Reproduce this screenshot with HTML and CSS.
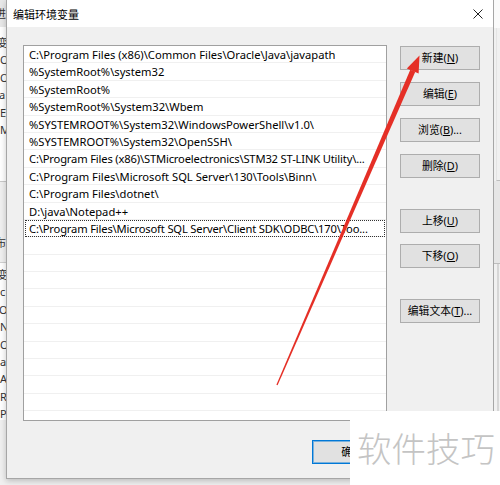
FILE: index.html
```html
<!DOCTYPE html>
<html lang="zh-CN">
<head>
<meta charset="utf-8">
<title>编辑环境变量</title>
<link rel="stylesheet" href="styles.css">
</head>
<body>
<div class="screen">
  <div class="bg-left">
    <div class="bgl-top"><div class="bgl-line cut5">进</div></div>
    <div class="bgl-list first">
      <div class="bgl-line cut3">变</div>
      <div class="bgl-line">Or</div>
      <div class="bgl-line">Or</div>
      <div class="bgl-line cut1">a</div>
      <div class="bgl-line">E</div>
      <div class="bgl-line">M</div>
    </div>
    <div class="bgl-gap"><div class="bgl-line cut5">布</div></div>
    <div class="bgl-list second">
      <div class="bgl-line cut3">变</div>
      <div class="bgl-line">c</div>
      <div class="bgl-line cut1">Or</div>
      <div class="bgl-line">NU</div>
      <div class="bgl-line">OS</div>
      <div class="bgl-line">a</div>
      <div class="bgl-line">A</div>
      <div class="bgl-line">R</div>
      <div class="bgl-line">P</div>
    </div>
  </div>

  <div class="dialog">
    <div class="titlebar">
      <span class="title">编辑环境变量</span>
      <svg class="close" width="10" height="10" viewBox="0 0 10 10"><path d="M0.5 0.5 L9.5 9.5 M9.5 0.5 L0.5 9.5" stroke="#222" stroke-width="1" fill="none"/></svg>
    </div>
    <div class="body">
      <div class="main">
        <div class="listbox">
          <div class="row">C:\Program Files (x86)\Common Files\Oracle\Java\javapath</div>
          <div class="row">%SystemRoot%\system32</div>
          <div class="row">%SystemRoot%</div>
          <div class="row">%SystemRoot%\System32\Wbem</div>
          <div class="row">%SYSTEMROOT%\System32\WindowsPowerShell\v1.0\</div>
          <div class="row">%SYSTEMROOT%\System32\OpenSSH\</div>
          <div class="row trunc">C:\Program Files (x86)\STMicroelectronics\STM32 ST-LINK Utility\...</div>
          <div class="row">C:\Program Files\Microsoft SQL Server\130\Tools\Binn\</div>
          <div class="row">C:\Program Files\dotnet\</div>
          <div class="row">D:\java\Notepad++</div>
          <div class="row focus trunc">C:\Program Files\Microsoft SQL Server\Client SDK\ODBC\170\Too...</div>
          <div class="row"></div>
          <div class="row"></div>
          <div class="row"></div>
          <div class="row"></div>
          <div class="row"></div>
          <div class="row"></div>
          <div class="row"></div>
          <div class="row"></div>
          <div class="row"></div>
          <div class="row"></div>
        </div>
        <div class="buttons">
          <button class="btn">新建(<u>N</u>)</button>
          <button class="btn">编辑(<u>E</u>)</button>
          <button class="btn">浏览(<u>B</u>)...</button>
          <button class="btn">删除(<u>D</u>)</button>
          <button class="btn group-start">上移(<u>U</u>)</button>
          <button class="btn tight">下移(<u>O</u>)</button>
          <button class="btn group-start">编辑文本(<u>T</u>)...</button>
        </div>
      </div>
      <div class="footer">
        <button class="btn default">确定</button>
        <button class="btn">取消</button>
      </div>
    </div>
  </div>

  <div class="bg-right">
    <div class="bgr-top"></div>
    <div class="bgr-a"></div>
    <div class="bgr-b"></div>
    <div class="bgr-c"></div>
  </div>

  <div class="watermark">软件技巧</div>

  <svg class="arrow" width="500" height="485" viewBox="0 0 500 485">
    <polygon points="415.3,71.7 410.3,69.7 276.4,384.8 277.6,385.2" fill="#e52f26"/>
    <polygon points="419.5,55.5 406.8,68.6 418.6,73.4" fill="#e52f26"/>
  </svg>
</div>
</body>
</html>
```

FILE: styles.css
```css
* {
  box-sizing: border-box;
}

html, body {
  margin: 0;
  padding: 0;
  background: #f0f0f0;
}

body {
  font-family: "Noto Sans", "Noto Sans CJK SC", sans-serif;
  font-size: 10.8px;
  color: #000;
}

.screen {
  position: relative;
  width: 500px;
  height: 485px;
  overflow: hidden;
  display: flex;
  align-items: flex-start;
  background: #f0f0f0;
}

/* background window, left sliver */
.bg-left {
  width: 6px;
  height: 485px;
  flex: none;
  overflow: hidden;
  display: flex;
  flex-direction: column;
  background: #f0f0f0;
  color: #333;
  font-size: 11px;
}

.bgl-top {
  height: 27px;
  background: #e8e8e8;
  padding-top: 5px;
}

.bgl-list {
  background: #fff;
}

.bgl-list.first {
  height: 155px;
  padding-top: 7px;
  border-bottom: 1px solid #c9c9c9;
}

.bgl-gap {
  height: 81px;
  padding-top: 52px;
  background: #f0f0f0;
  border-bottom: 1px solid #d0d0d0;
}

.bgl-list.second {
  height: 157px;
  padding-top: 3px;
}

.bgl-line {
  height: 17.4px;
  line-height: 17.4px;
  white-space: nowrap;
}

.cut1 { text-indent: -1px; }
.cut3 { text-indent: -3px; }
.cut5 { text-indent: -5px; }

/* dialog */
.dialog {
  width: 488px;
  flex: none;
  background: #f0f0f0;
  border: 1px solid #a6a6a6;
  border-top: 0;
  box-shadow: 0 2px 6px rgba(0, 0, 0, 0.22);
}

.titlebar {
  height: 27px;
  background: #fff;
  display: flex;
  align-items: center;
  justify-content: space-between;
  padding: 0 10px 0 6px;
}

.title {
  font-size: 11px;
  color: #000;
}

.close {
  display: block;
}

.body {
  padding: 18px 13px 14px 16px;
}

.main {
  display: flex;
  align-items: flex-start;
}

.listbox {
  width: 364px;
  height: 376px;
  flex: none;
  background: #fff;
  border: 1px solid #a0a0a0;
  overflow: hidden;
}

.row {
  height: 17.4px;
  line-height: 16.4px;
  padding-top: 1px;
  padding-left: 5px;
  font-size: 11.2px;
  border-bottom: 1px solid #f0f0f0;
  white-space: nowrap;
  overflow: hidden;
}

.row.trunc {
  letter-spacing: -0.17px;
}

.row.focus {
  outline: 1px dotted #333;
  outline-offset: -1px;
  margin: 0 1px 0 1px;
  padding-left: 4px;
}

.buttons {
  width: 80px;
  margin-left: 13px;
  margin-top: 1px;
  display: flex;
  flex-direction: column;
  gap: 12px;
}

.btn {
  width: 80px;
  height: 24px;
  padding: 0;
  margin: 0;
  background: #e1e1e1;
  border: 1px solid #adadad;
  font-family: "Noto Sans", "Noto Sans CJK SC", sans-serif;
  font-size: 10.8px;
  color: #000;
  line-height: 22px;
  text-align: center;
  white-space: nowrap;
}

.btn u {
  text-underline-offset: 1px;
}

.buttons .group-start {
  margin-top: 19px;
}

.buttons .tight {
  margin-top: -1px;
}

.footer {
  display: flex;
  justify-content: flex-end;
  gap: 8px;
  padding-top: 19px;
}

.btn.default {
  border-color: #0078d7;
  box-shadow: inset 0 0 0 1px rgba(0, 120, 215, 0.45);
}

/* background window, right sliver */
.bg-right {
  width: 6px;
  height: 485px;
  flex: none;
  display: flex;
  flex-direction: column;
  background: #f0f0f0;
}

.bgr-top {
  height: 28px;
  background: #fafafa;
}

.bgr-a {
  height: 153px;
  border-left: 1px solid #e4e4e4;
  margin-left: 2px;
  border-bottom: 1px solid #bdbdbd;
}

.bgr-b {
  height: 83px;
  background: #e6e6e6;
  border-bottom: 1px solid #bdbdbd;
}

.bgr-c {
  height: 150px;
  margin-left: 3px;
  border-left: 2px solid #d6d6d6;
}

/* overlays */
.watermark {
  position: absolute;
  left: 350px;
  top: 411px;
  width: 150px;
  height: 74px;
  background: #fff;
  display: flex;
  align-items: center;
  padding-left: 7px;
  padding-bottom: 2px;
  font-family: "Noto Sans CJK SC", sans-serif;
  font-weight: 300;
  font-size: 34.5px;
  letter-spacing: 0;
  color: #c4c4c4;
  white-space: nowrap;
}

.arrow {
  position: absolute;
  left: 0;
  top: 0;
  pointer-events: none;
}
```
